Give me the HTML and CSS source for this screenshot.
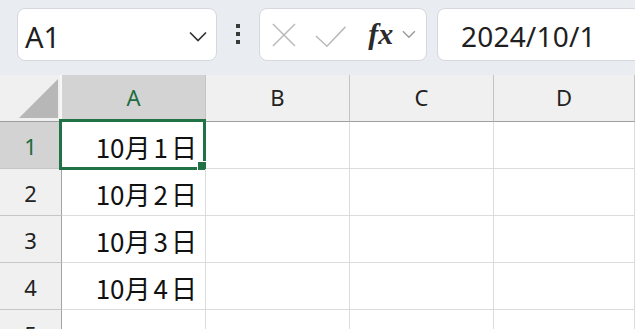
FILE: index.html
```html
<!DOCTYPE html>
<html lang="ja">
<head>
  <meta charset="UTF-8" />
  <title>Sheet – A1</title>
  <link rel="stylesheet" href="styles.css">
</head>
<body>
  <!-- Name box + formula bar -->
  <div class="toolbar">
    <div class="name-box">
      <span class="name">A1</span>
      <svg class="chev" width="18" height="11" viewBox="0 0 18 11"><polyline points="1,1.5 9,9.5 17,1.5" /></svg>
    </div>
    <div class="grip"><i></i><i></i><i></i></div>
    <div class="fx-group">
      <svg class="btn-x" width="26" height="26" viewBox="0 0 26 26"><line x1="1" y1="1" x2="25" y2="25" /><line x1="25" y1="1" x2="1" y2="25" /></svg>
      <svg class="btn-ok" width="34" height="24" viewBox="0 0 34 24"><polyline points="1,11 13,22 33,1" /></svg>
      <span class="fx">fx</span>
      <svg class="chev small" width="15" height="9" viewBox="0 0 15 9"><polyline points="1,1 7.5,7.5 14,1" /></svg>
    </div>
    <div class="formula-bar">2024/10/1</div>
  </div>

  <!-- Grid -->
  <div class="sheet">
    <div class="corner"><span class="tri"></span></div>
    <div class="col-hd selected">A</div>
    <div class="col-hd">B</div>
    <div class="col-hd">C</div>
    <div class="col-hd">D</div>

    <div class="row-hd selected">1</div>
    <div class="cell active">10月<span class="day">1</span>日<span class="sel"><span class="handle"></span></span></div>
    <div class="cell"></div><div class="cell"></div><div class="cell"></div>

    <div class="row-hd">2</div>
    <div class="cell">10月<span class="day">2</span>日</div>
    <div class="cell"></div><div class="cell"></div><div class="cell"></div>

    <div class="row-hd">3</div>
    <div class="cell">10月<span class="day">3</span>日</div>
    <div class="cell"></div><div class="cell"></div><div class="cell"></div>

    <div class="row-hd">4</div>
    <div class="cell">10月<span class="day">4</span>日</div>
    <div class="cell"></div><div class="cell"></div><div class="cell"></div>

    <div class="row-hd">5</div>
    <div class="cell"></div><div class="cell"></div><div class="cell"></div><div class="cell"></div>
  </div>
</body>
</html>
```

FILE: styles.css
```css
/* ------------------------------------------------------------------
   Global
------------------------------------------------------------------ */
*, *::before, *::after { box-sizing: border-box; }
html, body {
  margin: 0;
  height: 100%;
  overflow: hidden;
  background: #ffffff;
  font-family: "Noto Sans", "Noto Sans CJK JP", sans-serif;
  color: #1f1f1f;
}

/* ------------------------------------------------------------------
   Toolbar (name box, buttons, formula bar)
------------------------------------------------------------------ */
.toolbar {
  height: 75px;
  background: #e9edf1;
  display: flex;
  align-items: flex-start;
  padding: 8px 0 0 17px;
  overflow: hidden;
}
.toolbar > * { flex-shrink: 0; }
.name-box,
.fx-group,
.formula-bar {
  height: 53px;
  background: #ffffff;
  border: 1px solid #d5d8dc;
  border-radius: 8px;
  display: flex;
  align-items: center;
}
.name-box {
  width: 200px;
  padding: 3px 9px 0 7px;
  justify-content: space-between;
}
.name { font-size: 29px; line-height: 1; }
.chev polyline { fill: none; stroke: #333; stroke-width: 1.7; }
.chev.small polyline { stroke: #9a9a9a; stroke-width: 1.5; }

.grip {
  width: 42px;
  display: flex;
  flex-direction: column;
  align-items: center;
  gap: 4px;
  padding-top: 16px;
}
.grip i { width: 4px; height: 4px; background: #3a3a3a; }

.fx-group {
  width: 168px;
  padding: 0 10px 0 12px;
}
.btn-x line { stroke: #b9b9b9; stroke-width: 1.6; }
.btn-ok { margin: 4px 0 0 19px; }
.btn-ok polyline { fill: none; stroke: #b9b9b9; stroke-width: 1.6; }
.fx {
  font-family: "Liberation Serif", "DejaVu Serif", serif;
  font-style: italic;
  font-weight: bold;
  font-size: 30px;
  line-height: 1;
  color: #2b2b2b;
  margin: 0 9px 2px 22px;
}

.formula-bar {
  width: 260px;
  margin-left: 10px;
  padding: 2px 0 0 23px;
  font-size: 28px;
  letter-spacing: 0.2px;
}

/* ------------------------------------------------------------------
   Sheet grid
------------------------------------------------------------------ */
.sheet {
  display: grid;
  grid-template-columns: 62px 144px 144px 144px 1fr;
  grid-auto-rows: 47px;
}
.corner,
.col-hd,
.row-hd {
  background: #f0f0f0;
  font-size: 22px;
  display: flex;
  align-items: center;
  justify-content: center;
  color: #222;
}
.corner {
  position: relative;
  border-bottom: 1px solid #9e9e9e;
  border-right: 2px solid #f7f7f7;
}
.corner .tri {
  position: absolute;
  right: 2px;
  bottom: 3px;
  width: 39px;
  height: 39px;
  background: #b7b7b7;
  clip-path: polygon(100% 0, 100% 100%, 0 100%);
}
.col-hd {
  border-right: 1px solid #c4c4c4;
  border-bottom: 1px solid #9e9e9e;
  padding-bottom: 2px;
}
.row-hd {
  border-right: 1px solid #a3a3a3;
  border-bottom: 1px solid #c6c6c6;
  padding-top: 2px;
}
.col-hd.selected,
.row-hd.selected {
  background: #d3d3d3;
  color: #1e6b41;
}

.cell {
  position: relative;
  border-right: 1px solid #dcdcdc;
  border-bottom: 1px solid #dcdcdc;
  display: flex;
  align-items: center;
  justify-content: flex-end;
  padding: 2px 8px 0 0;
  font-family: "Noto Sans CJK JP", sans-serif;
  font-size: 26px;
  color: #111;
}
.cell .day { margin: 0 3px; }

/* active cell outline + fill handle */
.sel {
  position: absolute;
  top: -3px;
  left: -3px;
  right: -1px;
  bottom: -2px;
  border: 3px solid #217346;
  pointer-events: none;
}
.handle {
  position: absolute;
  right: -4px;
  bottom: -4px;
  width: 10px;
  height: 10px;
  background: #217346;
  border: 1px solid #ffffff;
}
```
